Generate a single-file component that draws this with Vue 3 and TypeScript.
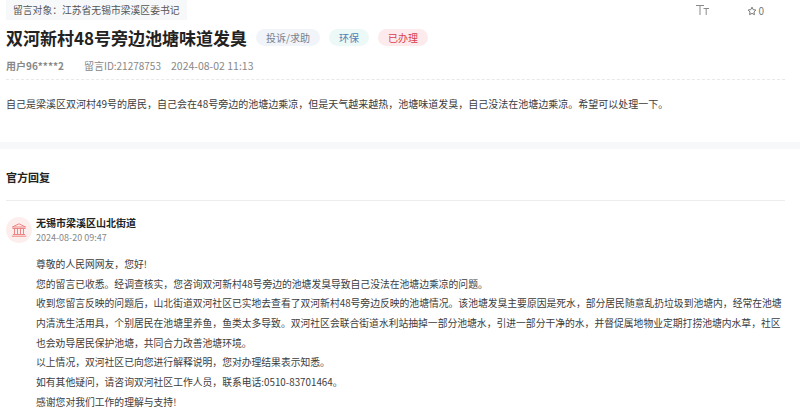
<template>
  <div class="page">
    <section class="question">
      <div class="top-row">
        <div class="target">留言对象：江苏省无锡市梁溪区委书记</div>
        <div class="tools">
          <svg class="font-icon" width="13" height="10" viewBox="0 0 13 10" fill="none" stroke="#8a8a8a" stroke-width="1">
            <path d="M0 0.5h8M4 0.5v9.5M7.5 3.5h5.5M10.2 3.5v6.5" />
          </svg>
          <span class="star">
            <svg width="10" height="10" viewBox="0 0 24 24" fill="none" stroke="#777" stroke-width="2.4" stroke-linejoin="round">
              <path d="M12 2.8l2.9 6 6.5.9-4.7 4.6 1.1 6.5-5.8-3.1-5.8 3.1 1.1-6.5-4.7-4.6 6.5-.9z" />
            </svg>
            0
          </span>
        </div>
      </div>
      <div class="title-row">
        <h1>双河新村48号旁边池塘味道发臭</h1>
        <span v-for="tag in tags" :key="tag.text" class="tag" :class="tag.cls">{{ tag.text }}</span>
      </div>
      <div class="meta">
        <span class="user">用户96****2</span>
        <span class="msg-id">留言ID:21278753</span>
        <span class="msg-date">2024-08-02 11:13</span>
      </div>
      <p class="content">自己是梁溪区双河村49号的居民，自己会在48号旁边的池塘边乘凉，但是天气越来越热，池塘味道发臭，自己没法在池塘边乘凉。希望可以处理一下。</p>
    </section>

    <div class="band"></div>

    <section class="reply">
      <h2>官方回复</h2>
      <div class="org">
        <div class="avatar">
          <svg width="16" height="14" viewBox="0 0 16 14" fill="none" stroke="#ec8583" stroke-width="1">
            <path d="M8 0.8L14.6 4H1.4z" />
            <path d="M1.5 5.5h13M3.5 5.5v5.5M6.5 5.5v5.5M9.5 5.5v5.5M12.5 5.5v5.5M2 11.5h12M0.8 13.2h14.4" />
          </svg>
        </div>
        <div class="org-text">
          <div class="org-name">无锡市梁溪区山北街道</div>
          <div class="org-date">2024-08-20 09:47</div>
        </div>
      </div>
      <div class="answer">
        <p v-for="line in lines" :key="line">{{ line }}</p>
      </div>
    </section>
  </div>
</template>

<script setup lang="ts">
const tags = [
  { text: '投诉/求助', cls: 'gray' },
  { text: '环保', cls: 'green' },
  { text: '已办理', cls: 'red' },
]

const lines = [
  '尊敬的人民网网友，您好!',
  '您的留言已收悉。经调查核实，您咨询双河新村48号旁边的池塘发臭导致自己没法在池塘边乘凉的问题。',
  '收到您留言反映的问题后，山北街道双河社区已实地去查看了双河新村48号旁边反映的池塘情况。该池塘发臭主要原因是死水，部分居民随意乱扔垃圾到池塘内，经常在池塘内清洗生活用具，个别居民在池塘里养鱼，鱼类太多导致。双河社区会联合街道水利站抽掉一部分池塘水，引进一部分干净的水，并督促属地物业定期打捞池塘内水草，社区也会劝导居民保护池塘，共同合力改善池塘环境。',
  '以上情况，双河社区已向您进行解释说明，您对办理结果表示知悉。',
  '如有其他疑问，请咨询双河社区工作人员，联系电话:0510-83701464。',
  '感谢您对我们工作的理解与支持!',
]
</script>

<style>
html,
body {
  background: #fff;
  overflow: hidden;
}
</style>

<style scoped>
.page {
  width: 800px;
  height: 414px;
  overflow: hidden;
  font-family: "Noto Sans CJK SC", "Noto Sans", sans-serif;
  color: #333;
}

.question {
  padding: 0 15px 0 6px;
}

.top-row {
  display: flex;
  justify-content: space-between;
}

.target {
  height: 20px;
  line-height: 20px;
  padding: 0 7px;
  background: #f7f8fa;
  font-size: 9.8px;
  color: #555;
}

.tools {
  display: flex;
  align-items: center;
  height: 22px;
  gap: 38px;
  margin-right: 21px;
  color: #777;
  font-size: 10px;
}

.font-icon {
  margin-top: -2px;
}

.star {
  display: flex;
  align-items: center;
  gap: 1px;
  margin-top: -1px;
}

.title-row {
  display: flex;
  align-items: center;
  gap: 9px;
  margin-top: 6px;
  height: 19px;
}

h1 {
  margin: 0;
  font-size: 17px;
  line-height: 19px;
  font-weight: 700;
  color: #222;
}

.tag {
  height: 17px;
  line-height: 17px;
  padding: 0 10px;
  border-radius: 9px;
  font-size: 10px;
}

.gray {
  background: #f1f4f9;
  color: #75808f;
}

.green {
  background: #ecf9f7;
  color: #4c7fb5;
}

.red {
  background: #fdeaec;
  color: #d8404f;
}

.meta {
  display: flex;
  margin-top: 12px;
  height: 14px;
  line-height: 14px;
  font-size: 10px;
  color: #888;
}

.user {
  font-weight: 700;
  margin-right: 20px;
}

.msg-id {
  margin-right: 10px;
}

.msg-date {
  font-size: 10.5px;
}

.content {
  margin: 6px 0 0;
  padding-top: 15px;
  border-top: 1px dashed #e8e8e8;
  font-size: 10px;
  line-height: 18px;
  color: #3c3c3c;
}

.band {
  height: 7px;
  margin-top: 29px;
  background: #f7f8fa;
}

.reply {
  padding: 0 15px 0 6px;
}

h2 {
  margin: 0;
  padding: 20px 0 15px;
  border-bottom: 1px solid #ececec;
  font-size: 11px;
  line-height: 16px;
  font-weight: 700;
  color: #222;
}

.org {
  display: flex;
  gap: 4px;
  margin-top: 16px;
}

.avatar {
  display: flex;
  align-items: center;
  justify-content: center;
  width: 26px;
  height: 26px;
  border-radius: 50%;
  background: #fdeeee;
}

.org-text {
  margin-top: -1px;
}

.org-name {
  font-size: 10px;
  line-height: 14px;
  font-weight: 700;
  color: #222;
}

.org-date {
  font-size: 9px;
  line-height: 15px;
  color: #888;
}

.answer {
  margin-top: 10px;
  padding-left: 30px;
}

.answer p {
  margin: 0;
  font-size: 9.8px;
  line-height: 19.65px;
  color: #3c3c3c;
}
</style>
